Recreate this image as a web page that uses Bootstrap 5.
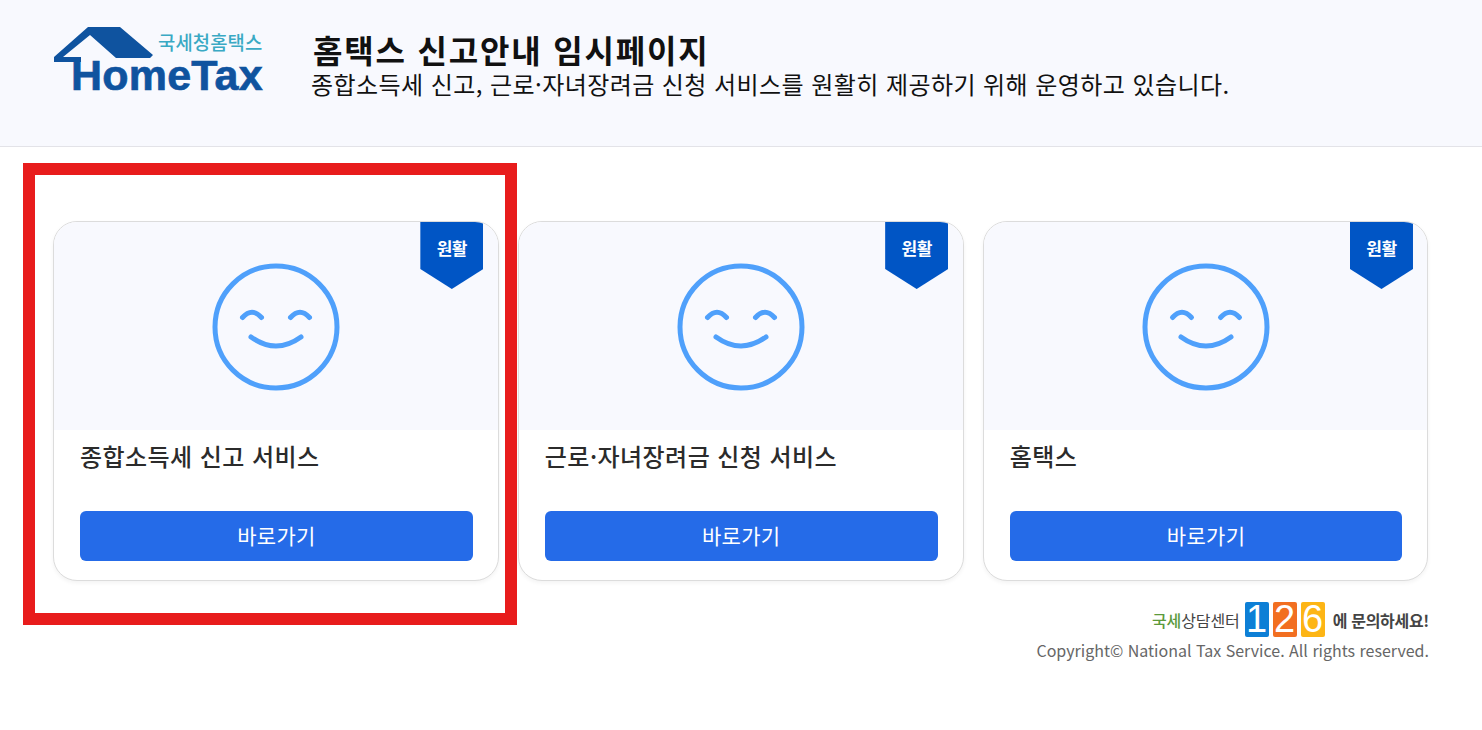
<!DOCTYPE html>
<html lang="ko">
<head>
<meta charset="utf-8">
<title>홈택스 신고안내 임시페이지</title>
<link href="https://cdn.jsdelivr.net/npm/bootstrap@5.3.0/dist/css/bootstrap.min.css" rel="stylesheet">
<style>
html,body{height:100%;}
body{font-family:"Noto Sans CJK KR","Noto Sans",sans-serif;background:#fff;color:#212529;position:relative;overflow:hidden;}
.top-band{height:147px;background:#f8f9fe;border-bottom:1px solid #e3e3e8;padding:27px 0 0 53px;gap:48px;}
.logo-box{width:210px;height:66px;position:relative;flex:none;}
.logo-roof{position:absolute;left:0;top:0;}
.logo-ko{position:absolute;left:105px;top:5px;font-size:18.800px;line-height:20px;letter-spacing:.1px;color:#3aa9c4;font-weight:500;white-space:nowrap;}
.logo-en{position:absolute;left:18px;top:30px;font-family:"Liberation Sans",sans-serif;font-weight:700;font-size:43px;line-height:36px;color:#0f539f;letter-spacing:.2px;white-space:nowrap;-webkit-text-stroke:.7px #0f539f;}
.head-title{font-size:32px;line-height:32px;font-weight:700;margin:6px 0 0 2px;color:#111;letter-spacing:1.800px;}
.head-sub{font-size:24px;line-height:30px;margin:4px 0 0;color:#111;letter-spacing:.43px;}
.cards-row{padding:74px 53.500px 0 53px;gap:19px;}
.svc-card{flex:1 1 0;height:360px;border:1px solid #dcdcdc;border-radius:24px;overflow:hidden;background:#fff;box-shadow:0 2px 4px rgba(0,0,0,.05);}
.svc-visual{height:208px;background:#f8f9fe;position:relative;}
.smile{transform:translateY(1px);}
.ribbon{position:absolute;right:14.500px;top:0;width:63px;height:67px;background:#0055c5;clip-path:polygon(0 0,100% 0,100% 47px,50% 100%,0 47px);color:#fff;font-size:17px;font-weight:700;text-align:center;line-height:20px;padding-top:16px;letter-spacing:-.5px;}
.svc-title{font-size:24px;line-height:30px;font-weight:500;color:#2b2b2b;padding:11px 26px 0;margin:0;height:81px;letter-spacing:.45px;}
.svc-btn{display:block;margin:0 25px 0 26px;height:50px;line-height:48px;padding:0;background:#256be8;border:0;border-radius:6px;color:#fff;font-size:21px;letter-spacing:.3px;}
.svc-btn:hover{background:#256be8;color:#fff;}
.foot-line{padding:21px 53px 0 0;}
.call-logo{height:35px;}
.call-ko{font-size:16px;letter-spacing:-.1px;color:#444;margin-right:5px;}
.call-ko b{color:#5c9a3c;font-weight:500;}
.num{width:24px;height:35px;border-radius:2px;color:#fff;font-size:38px;line-height:35px;text-align:center;font-family:"Liberation Sans",sans-serif;margin-right:4px;}
.n1{background:#0d7fd6;}.n2{background:#f26f21;}.n6{background:#fdb515;}
.call-end{font-size:16px;font-weight:700;color:#444;letter-spacing:-.3px;margin-left:4px;}
.copy{font-size:16px;line-height:22px;color:#666;margin-top:2px;}
.red-frame{position:absolute;left:23px;top:163px;width:494px;height:462px;border:12px solid #e81c1c;pointer-events:none;}
</style>
</head>
<body>
<header class="top-band d-flex">
  <div class="logo-box">
    <svg class="logo-roof" width="210" height="66" viewBox="0 0 210 66"><path fill="#0f539f" d="M35 0H67L100 28 97 31H63L37 8 10 30H28V35H1V30Z"/></svg>
    <span class="logo-ko">국세청홈택스</span>
    <span class="logo-en">HomeTax</span>
  </div>
  <div>
    <h1 class="head-title">홈택스 신고안내 임시페이지</h1>
    <p class="head-sub">종합소득세 신고, 근로·자녀장려금 신청 서비스를 원활히 제공하기 위해 운영하고 있습니다.</p>
  </div>
</header>
<main>
  <div class="cards-row d-flex">
    <div class="svc-card">
      <div class="svc-visual d-flex align-items-center justify-content-center">
        <svg class="smile" width="130" height="130" viewBox="0 0 130 130" fill="none" stroke="#4fa0fb" stroke-width="5" stroke-linecap="round"><circle cx="65" cy="65" r="61"/><path d="M31.500 55.500Q41 45 50.500 55.500M79.500 55.500Q89 45 98.500 55.500M40 75Q65 93 90 75"/></svg>
        <div class="ribbon">원활</div>
      </div>
      <h2 class="svc-title">종합소득세 신고 서비스</h2>
      <a href="#" class="btn svc-btn">바로가기</a>
    </div>
    <div class="svc-card">
      <div class="svc-visual d-flex align-items-center justify-content-center">
        <svg class="smile" width="130" height="130" viewBox="0 0 130 130" fill="none" stroke="#4fa0fb" stroke-width="5" stroke-linecap="round"><circle cx="65" cy="65" r="61"/><path d="M31.500 55.500Q41 45 50.500 55.500M79.500 55.500Q89 45 98.500 55.500M40 75Q65 93 90 75"/></svg>
        <div class="ribbon">원활</div>
      </div>
      <h2 class="svc-title">근로·자녀장려금 신청 서비스</h2>
      <a href="#" class="btn svc-btn">바로가기</a>
    </div>
    <div class="svc-card">
      <div class="svc-visual d-flex align-items-center justify-content-center">
        <svg class="smile" width="130" height="130" viewBox="0 0 130 130" fill="none" stroke="#4fa0fb" stroke-width="5" stroke-linecap="round"><circle cx="65" cy="65" r="61"/><path d="M31.500 55.500Q41 45 50.500 55.500M79.500 55.500Q89 45 98.500 55.500M40 75Q65 93 90 75"/></svg>
        <div class="ribbon">원활</div>
      </div>
      <h2 class="svc-title">홈택스</h2>
      <a href="#" class="btn svc-btn">바로가기</a>
    </div>
  </div>
  <footer class="foot-line text-end">
    <div class="call-logo d-flex justify-content-end align-items-center">
      <span class="call-ko"><b>국세</b>상담센터</span>
      <span class="num n1">1</span><span class="num n2">2</span><span class="num n6">6</span>
      <span class="call-end">에 문의하세요!</span>
    </div>
    <div class="copy">Copyright© National Tax Service. All rights reserved.</div>
  </footer>
</main>
<div class="red-frame"></div>
<script src="https://cdn.jsdelivr.net/npm/bootstrap@5.3.0/dist/js/bootstrap.bundle.min.js"></script>
</body>
</html>
